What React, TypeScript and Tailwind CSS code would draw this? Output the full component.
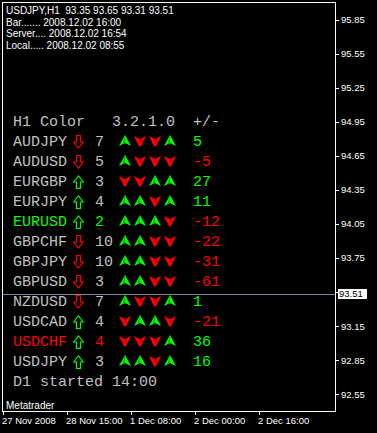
import React from "react";

type Row = {
  sym: string;
  up: boolean;
  n: number;
  arrows: boolean[];
  val: number;
  color?: string;
};

const rows: Row[] = [
  { sym: "AUDJPY", up: false, n: 7, arrows: [true, false, false, true], val: 5 },
  { sym: "AUDUSD", up: false, n: 5, arrows: [true, false, false, false], val: -5 },
  { sym: "EURGBP", up: true, n: 3, arrows: [false, false, true, true], val: 27 },
  { sym: "EURJPY", up: true, n: 4, arrows: [true, true, false, true], val: 11 },
  { sym: "EURUSD", up: true, n: 2, arrows: [true, true, true, false], val: -12, color: "text-[#00ff00]" },
  { sym: "GBPCHF", up: false, n: 10, arrows: [true, true, false, false], val: -22 },
  { sym: "GBPJPY", up: false, n: 10, arrows: [true, true, false, false], val: -31 },
  { sym: "GBPUSD", up: false, n: 3, arrows: [true, true, false, false], val: -61 },
  { sym: "NZDUSD", up: false, n: 7, arrows: [true, false, false, true], val: 1 },
  { sym: "USDCAD", up: true, n: 4, arrows: [false, true, true, false], val: -21 },
  { sym: "USDCHF", up: true, n: 4, arrows: [false, false, false, true], val: 36, color: "text-[#ff0000]" },
  { sym: "USDJPY", up: true, n: 3, arrows: [true, true, false, true], val: 16 },
];

const prices = ["95.85", "95.55", "95.25", "94.95", "94.65", "94.35", "94.05", "93.75", "93.45", "93.15", "92.85", "92.55"];
const times = ["27 Nov 2008", "28 Nov 15:00", "1 Dec 08:00", "2 Dec 00:00", "2 Dec 16:00"];

const BigArrow = ({ up }: { up: boolean }) => (
  <svg width="11" height="14" viewBox="0 0 11 14" fill="none" stroke={up ? "#00ff00" : "#ff0000"} strokeWidth={1.2}>
    {up ? (
      <path d="M3.5 13.5 H7.5 V7 H10.3 L5.5 1 L0.7 7 H3.5 Z" />
    ) : (
      <path d="M3.5 0.5 H7.5 V7 H10.3 L5.5 13 L0.7 7 H3.5 Z" />
    )}
  </svg>
);

const SmallArrow = ({ up }: { up: boolean }) =>
  up ? (
    <svg width="12" height="12" viewBox="0 0 12 12">
      <polygon points="6,0 12,11 6,8 0,11" fill="#00ff00" />
      <polygon points="6,0 6,8 3.5,9.3" fill="#00b000" />
    </svg>
  ) : (
    <svg width="12" height="12" viewBox="0 0 12 12">
      <polygon points="0,1 6,4 12,1 6.8,11.5 5.2,11.5" fill="#ff0000" />
      <polygon points="6,4 8.5,2.8 6.4,9" fill="#b00000" />
    </svg>
  );

export default function App() {
  return (
    <div className="relative w-[377px] h-[433px] bg-black overflow-hidden font-['Liberation_Sans',sans-serif] text-white">
      <div className="flex h-[412px]">
        {/* chart frame */}
        <div className="relative ml-[2px] mt-[2px] w-[334px] h-[410px] border border-white flex flex-col">
          <div className="pl-[3px] pt-[2px] text-[10px] leading-[11.5px] whitespace-pre">
            <div>USDJPY,H1  93.35 93.65 93.31 93.51</div>
            <div>Bar....... 2008.12.02 16:00</div>
            <div>Server.... 2008.12.02 16:54</div>
            <div>Local..... 2008.12.02 08:55</div>
          </div>

          {/* indicator table */}
          <div className="mt-[62px] pl-[10px] font-['Liberation_Mono',monospace] text-[15px] leading-[20px] text-[#c0c0c0]">
            <div className="h-[20px] whitespace-pre">H1 Color   3.2.1.0  +/-</div>
            {rows.map((r) => (
              <div key={r.sym} className="h-[20px] grid grid-cols-[60px_22px_24px_74px_40px]">
                <span className={r.color ?? ""}>{r.sym}</span>
                <span className="pt-[2px]">
                  <BigArrow up={r.up} />
                </span>
                <span className={r.color ?? ""}>{r.n}</span>
                <span className="flex gap-[3px] pt-[2px]">
                  {r.arrows.map((a, i) => (
                    <SmallArrow key={i} up={a} />
                  ))}
                </span>
                <span className={r.val >= 0 ? "text-[#00ff00]" : "text-[#ff0000]"}>{r.val}</span>
              </div>
            ))}
            <div className="h-[20px] whitespace-pre">D1 started 14:00</div>
          </div>

          <div className="mt-auto pl-[3px] h-[10px] text-[10px] leading-[10px]">Metatrader</div>

          {/* current price line */}
          <div className="absolute left-0 right-0 top-[291px] h-px bg-[#778899]" />
        </div>

        {/* price axis */}
        <div className="flex flex-col pt-[3px] text-[9.5px]">
          {prices.map((p) => (
            <div key={p} className="h-[35px] flex items-center gap-[2px]">
              <div className="w-[3px] h-px bg-white" />
              <span>{p}</span>
            </div>
          ))}
        </div>
      </div>

      {/* time axis */}
      <div className="flex pl-[2px] text-[9.5px] leading-[11.5px]">
        {times.map((t) => (
          <div key={t} className="w-[64px] flex flex-col">
            <div className="ml-[1px] w-px h-[3px] bg-white" />
            <span className="whitespace-pre">{t}</span>
          </div>
        ))}
      </div>

      {/* current price tag */}
      <div className="absolute left-[338px] top-[289px] w-[29px] h-[10px] bg-white text-black text-[9.5px] leading-[10px] pl-[1px]">
        93.51
      </div>
    </div>
  );
}
